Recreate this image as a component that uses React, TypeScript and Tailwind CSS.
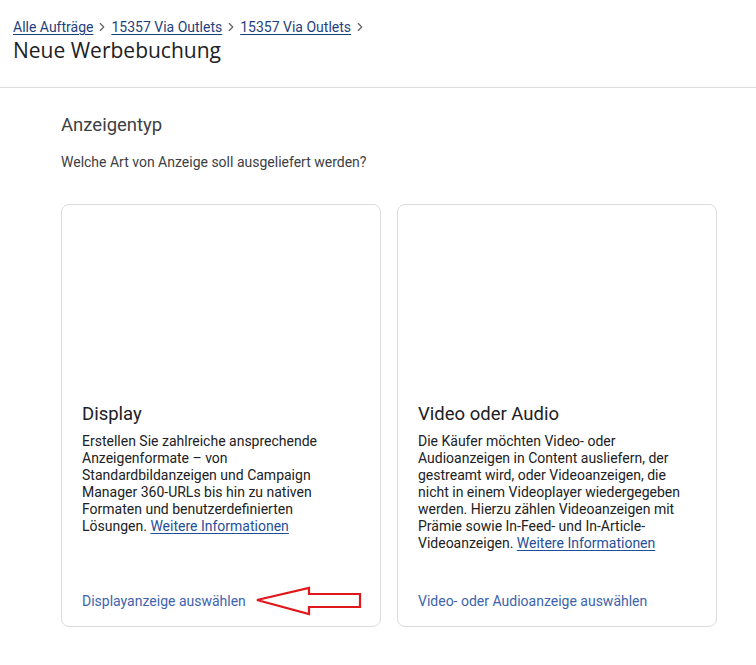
import { ChevronRight } from 'lucide-react';

const body = "font-['Roboto','Liberation_Sans',sans-serif]";
const heading = "font-['Open_Sans','Roboto',sans-serif]";

function Crumb({ label }: { label: string }) {
  return (
    <>
      <a className="text-[#1f3f7c] underline underline-offset-2 decoration-1">{label}</a>
      <ChevronRight className="w-[14px] h-[14px] text-[#5f6368] mx-[2px]" strokeWidth={2} />
    </>
  );
}

interface CardProps {
  title: string;
  children: React.ReactNode;
  action: string;
  arrow?: boolean;
}

function TypeCard({ title, children, action, arrow }: CardProps) {
  return (
    <div className="relative w-[320px] h-[423px] border border-[#dadce0] rounded-lg flex flex-col px-5 pb-[15px]">
      <div className="h-[197px] shrink-0" />
      <h3 className="text-[18.5px] leading-6 text-[#202124]">{title}</h3>
      <p className={`${body} mt-[7px] text-[14px] leading-[17px] text-[#202124]`}>{children}</p>
      <a className={`${body} mt-auto text-[14px] leading-5 text-[#3d64ad]`}>{action}</a>
      {arrow && (
        <svg
          className="absolute left-[192px] top-[381px] pointer-events-none"
          width="110"
          height="32"
          viewBox="0 0 110 32"
        >
          <polygon
            points="3,14 55,2 55,8 106,8 106,21 55,21 55,28"
            fill="none"
            stroke="#e0181c"
            strokeWidth="2.2"
            strokeLinejoin="miter"
          />
        </svg>
      )}
    </div>
  );
}

export default function App() {
  return (
    <div className={`${body} bg-white min-h-screen text-[#202124]`}>
      <header className="pl-[13px] pt-[18px] h-[88px] border-b border-[#dadce0]">
        <nav className="flex items-center text-[14px] leading-[18px]">
          <Crumb label="Alle Aufträge" />
          <Crumb label="15357 Via Outlets" />
          <Crumb label="15357 Via Outlets" />
        </nav>
        <h1 className={`${heading} text-[21px] leading-7 text-[#202124]`}>Neue Werbebuchung</h1>
      </header>

      <main className="pl-[61px] pt-[25px]">
        <h2 className="text-[18.5px] leading-6 text-[#3c4043]">Anzeigentyp</h2>
        <p className="mt-[15px] text-[14px] leading-5 text-[#3c4043]">
          Welche Art von Anzeige soll ausgeliefert werden?
        </p>

        <div className="mt-[32px] flex gap-4">
          <TypeCard title="Display" action="Displayanzeige auswählen" arrow>
            Erstellen Sie zahlreiche ansprechende Anzeigenformate – von Standardbildanzeigen und
            Campaign Manager 360-URLs bis hin zu nativen Formaten und benutzerdefinierten Lösungen.{' '}
            <a className="text-[#1f4f9a] underline underline-offset-2">Weitere Informationen</a>
          </TypeCard>
          <TypeCard title="Video oder Audio" action="Video- oder Audioanzeige auswählen">
            Die Käufer möchten Video- oder Audioanzeigen in Content ausliefern, der gestreamt wird,
            oder Videoanzeigen, die nicht in einem Videoplayer wiedergegeben werden. Hierzu zählen
            Videoanzeigen mit Prämie sowie In-Feed- und In-Article-Videoanzeigen.{' '}
            <a className="text-[#1f4f9a] underline underline-offset-2">Weitere Informationen</a>
          </TypeCard>
        </div>
      </main>
    </div>
  );
}
